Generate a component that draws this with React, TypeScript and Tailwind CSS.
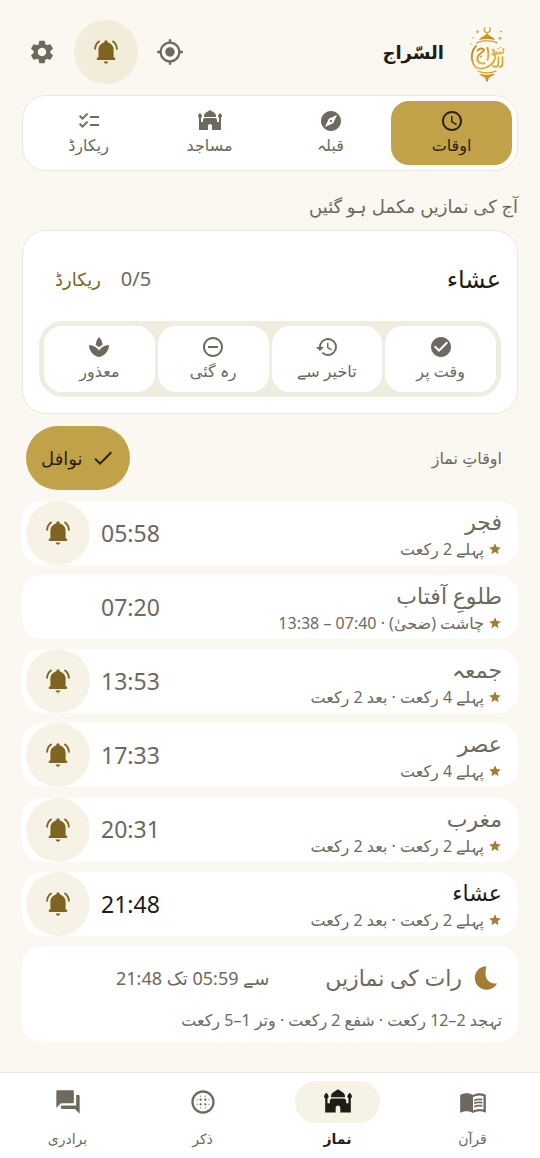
import {
    MdBlurCircular,
    MdCheck,
    MdCheckCircle,
    MdChecklist,
    MdExplore,
    MdForum,
    MdHistory,
    MdMenuBook,
    MdMosque,
    MdMyLocation,
    MdRemoveCircleOutline,
    MdSchedule,
    MdSettings,
    MdSpa,
    MdStar,
} from "react-icons/md";

const tabs = [
    { label: "اوقات", icon: MdSchedule, active: true },
    { label: "قبلہ", icon: MdExplore },
    { label: "مساجد", icon: MdMosque },
    { label: "ریکارڈ", icon: MdChecklist },
];

const statuses = [
    { label: "وقت پر", icon: MdCheckCircle },
    { label: "تاخیر سے", icon: MdHistory },
    { label: "رہ گئی", icon: MdRemoveCircleOutline },
    { label: "معذور", icon: MdSpa },
];

const prayers = [
    { name: "فجر", time: "05:58", note: "پہلے 2 رکعت", bell: true },
    { name: "طلوعِ آفتاب", time: "07:20", note: "چاشت (ضحیٰ) · 07:40 – 13:38", bell: false },
    { name: "جمعہ", time: "13:53", note: "پہلے 4 رکعت · بعد 2 رکعت", bell: true },
    { name: "عصر", time: "17:33", note: "پہلے 4 رکعت", bell: true },
    { name: "مغرب", time: "20:31", note: "پہلے 2 رکعت · بعد 2 رکعت", bell: true },
    { name: "عشاء", time: "21:48", note: "پہلے 2 رکعت · بعد 2 رکعت", bell: true, current: true },
];

const navItems = [
    { label: "قرآن", icon: MdMenuBook },
    { label: "نماز", icon: MdMosque, active: true },
    { label: "ذکر", icon: MdBlurCircular },
    { label: "برادری", icon: MdForum },
];

const BellIcon = () => (
    <svg viewBox="0 0 24 24" className="size-6 text-[#7d6521]" fill="currentColor" aria-hidden="true">
        <path d="M12 .3a1.700 1.700 0 0 0-1.700 1.700v.400C6.900 3.100 4.400 6 4.400 9.600v8H3.900a1.200 1.200 0 0 0 0 2.400h16.200a1.200 1.200 0 0 0 0-2.400h-.500v-8c0-3.600-2.500-6.500-5.900-7.200V2A1.700 1.700 0 0 0 12 .300zM9.600 21.600h4.800c-.400 1.300-1.300 2.100-2.400 2.100s-2-.800-2.400-2.100z" />
        <path d="M5 1.600C2.700 3.300 1.300 5.700 1.100 8.800M19 1.600c2.300 1.700 3.700 4.100 3.900 7.200" fill="none" stroke="currentColor" strokeWidth="1.900" strokeLinecap="round" />
    </svg>
);

const MoonIcon = () => (
    <svg viewBox="0 0 24 24" className="size-6 shrink-0 text-[#a37c35]" fill="currentColor" aria-hidden="true">
        <path d="M12.300.3C5.700.3.800 5.500.800 12c0 6.600 5.200 11.700 11.700 11.700 4.600 0 8.600-2.600 10.500-6.500-6.400 1.600-11.500-3.500-11.500-9.200 0-2.900.300-5.300.800-7.700z" />
    </svg>
);

const Logo = () => (
    <svg viewBox="0 0 40 62" className="h-[62px] w-10" fill="none" role="img" aria-label="السراج">
        <defs>
            <linearGradient id="gold" gradientUnits="userSpaceOnUse" x1="4" y1="8" x2="36" y2="56">
                <stop offset="0" stopColor="#dcae3c" />
                <stop offset="0.35" stopColor="#c08c1e" />
                <stop offset="0.6" stopColor="#e2b840" />
                <stop offset="1" stopColor="#bd861a" />
            </linearGradient>
        </defs>
        <g stroke="url(#gold)" strokeLinecap="round" strokeLinejoin="round">
            <path d="M17 6.500a3 3 0 1 0 4.400 0" strokeWidth="1.100" />
            <path d="M8.500 22c6-3 15-3 21 0M10 50c5 2.500 13 2.500 18 0" strokeWidth="1.200" />
            {/* lantern body and lettering strokes */}
            <path d="M8 25c-4 4-5.500 11-3 17 1.500 4 5 6 9 5.500 6-.500 12-5 13-10 .400-3-.500-6-2-9" strokeWidth="1.900" />
            <path d="M9.500 29.500c2-2.500 5-2.500 6.500-.500M16 29c0 2-5.500 3-6.500 8-.800 4 2.500 6.500 7 5" strokeWidth="2" />
            <path d="M19.500 27c1 4 1.500 8 0 12" strokeWidth="2" />
            <path d="M24 33c2 1.500 4.500 1 4.500-2 .500 2.500 3 2.500 3.500 0 .500 2 3.500 2 3.500-1.500v-2" strokeWidth="1.700" />
            <path d="M34.500 36v7c0 2-1 3-3 3M30.500 36v6.500c0 3-3 4-5.500 2.500" strokeWidth="1.700" />
        </g>
        <g fill="url(#gold)">
            <path d="M19 11.500c.600 3 6 3.500 8 7.500-5-1.500-11-1.500-16 0 2-4 7.400-4.500 8-7.500zM11 52.500c5 1.500 11 1.500 16 0-1.500 3-6 3-6.500 5.500-.200 1.500-.800 2.500-1.500 3-.700-.500-1.300-1.500-1.500-3C17 55.500 12.500 55.500 11 52.500z" />
            <path d="M9.500 8.500l.600 1.700 1.700.600-1.700.600-.600 1.700-.600-1.700-1.700-.600 1.700-.600zM32 15l.600 1.700 1.700.600-1.700.600-.600 1.700-.600-1.700-1.700-.600 1.700-.600z" />
            <circle cx="33" cy="10.500" r=".8" />
            <circle cx="5" cy="17" r=".7" />
            <circle cx="3" cy="23" r=".7" />
            <circle cx="13" cy="35.500" r="1.100" />
            <circle cx="30" cy="27.500" r=".8" />
            <circle cx="32.500" cy="26.500" r=".8" />
        </g>
    </svg>
);

export default function App() {
    return (
        <div dir="rtl" lang="ur" className="flex min-h-screen flex-col bg-[#fbf8f1] font-['Noto_Sans','DejaVu_Sans',sans-serif] text-[#6d695e]">
            <header className="flex h-[95px] shrink-0 items-center justify-between pt-2 pr-8 pl-[10px]">
                <div className="flex items-center gap-6">
                    <Logo />
                    <h1 className="text-lg font-bold text-[#201d17]">السّراج</h1>
                </div>
                <div className="flex">
                    <button aria-label="مقام" className="flex size-16 items-center justify-center rounded-full"><MdMyLocation size={28} /></button>
                    <button aria-label="اطلاعات" className="flex size-16 items-center justify-center rounded-full bg-[#f2ecda]"><BellIcon /></button>
                    <button aria-label="ترتیبات" className="flex size-16 items-center justify-center rounded-full"><MdSettings size={28} /></button>
                </div>
            </header>

            <main className="flex flex-1 flex-col px-[22px]">
                <div className="grid grid-cols-4 rounded-3xl border border-[#ebe8dd] bg-white p-[5px]">
                    {tabs.map(({ label, icon: Icon, active }) => (
                        <button key={label} className={`flex h-16 flex-col items-center justify-center rounded-[18px] text-base leading-6 ${active ? "bg-[#c2a249] text-[#2b210b]" : ""}`}>
                            <Icon size={24} />
                            {label}
                        </button>
                    ))}
                </div>

                <h2 className="mt-[19px] mb-2 text-lg leading-8">آج کی نمازیں مکمل ہو گئیں</h2>

                <section className="rounded-3xl border border-[#ebe8dd] bg-white p-4">
                    <div className="flex h-16 items-center justify-between">
                        <h3 className="text-2xl text-[#201d17]">عشاء</h3>
                        <div className="flex items-center gap-5 pl-4">
                            <span className="text-xl">0/5</span>
                            <button className="text-lg text-[#7d6521]">ریکارڈ</button>
                        </div>
                    </div>
                    <div className="mt-[10px] grid grid-cols-4 gap-[3px] rounded-3xl bg-[#efede0] p-[5px]">
                        {statuses.map(({ label, icon: Icon }) => (
                            <button key={label} className="flex h-[66px] flex-col items-center justify-center rounded-[18px] bg-white text-base leading-6">
                                <Icon size={24} />
                                {label}
                            </button>
                        ))}
                    </div>
                </section>

                <div className="mt-3 mb-[11px] flex items-center justify-between pr-4 pl-1">
                    <h2 className="text-base">اوقاتِ نماز</h2>
                    <button className="flex h-16 items-center gap-2 rounded-full bg-[#c2a249] px-[15px] text-lg text-[#2b210b]">
                        <MdCheck size={24} />
                        نوافل
                    </button>
                </div>

                <ul className="flex flex-1 flex-col justify-between pb-[30px]">
                    {prayers.map(({ name, time, note, bell, current }) => (
                        <li key={name} className="flex h-16 items-center rounded-[20px] bg-white pr-4 pl-1">
                            <div className="flex-1">
                                <h3 className={`text-[22px] leading-8 ${current ? "text-[#201d17]" : ""}`}>{name}</h3>
                                <p className="flex items-center gap-1 text-base leading-6">
                                    <MdStar size={14} className="text-[#a37c35]" />
                                    {note}
                                </p>
                            </div>
                            <time className={`ml-[11px] text-[23px] ${current ? "text-[#201d17]" : ""}`}>{time}</time>
                            {bell ? (
                                <button aria-label={`${name} اطلاع`} className="flex size-16 items-center justify-center rounded-full bg-[#f6f2e6]"><BellIcon /></button>
                            ) : (
                                <span className="size-16" />
                            )}
                        </li>
                    ))}
                    <li className="h-24 rounded-[20px] bg-white px-4 pt-4">
                        <div className="flex h-8 items-center pr-1">
                            <MoonIcon />
                            <h3 className="mr-3 text-[22px]">رات کی نمازیں</h3>
                            <p className="mr-14 text-lg">سے 05:59 تک 21:48</p>
                        </div>
                        <p className="mt-[14px] text-base leading-6">تہجد 2–12 رکعت · شفع 2 رکعت · وتر 1–5 رکعت</p>
                    </li>
                </ul>
            </main>

            <nav className="grid h-[86px] shrink-0 grid-cols-4 border-t border-[#ebe8dd] bg-white pt-2">
                {navItems.map(({ label, icon: Icon, active }) => (
                    <a key={label} href="#" className={`flex flex-col items-center gap-1 text-sm leading-6 ${active ? "font-bold text-[#201d17]" : ""}`}>
                        <span className={`flex h-[42px] w-[85px] items-center justify-center rounded-full ${active ? "bg-[#f6f2e6]" : ""}`}><Icon size={28} /></span>
                        {label}
                    </a>
                ))}
            </nav>
        </div>
    );
}
